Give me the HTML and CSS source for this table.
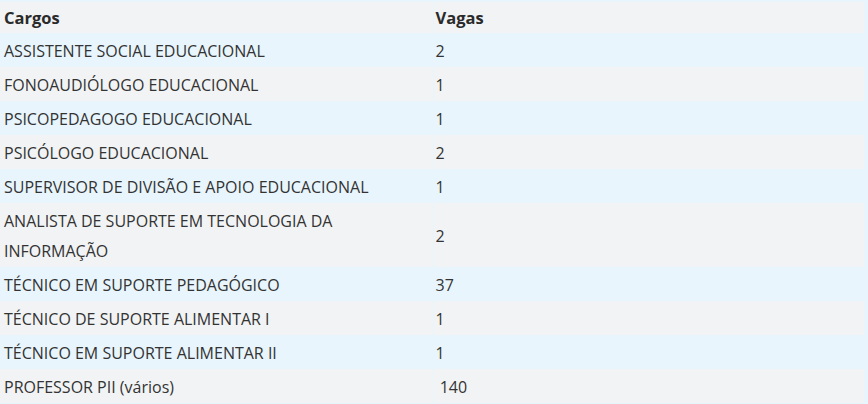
FILE: index.html
```html
<!DOCTYPE html>
<html lang="pt-BR">
<head>
<meta charset="utf-8">
<title>Cargos e Vagas</title>
<link rel="stylesheet" href="styles.css">
</head>
<body>
<table class="vagas">
  <thead>
    <tr class="row-gray"><th class="col-cargo">Cargos</th><th class="col-vagas">Vagas</th></tr>
  </thead>
  <tbody>
    <tr class="row-blue"><td>ASSISTENTE SOCIAL EDUCACIONAL</td><td>2</td></tr>
    <tr class="row-gray"><td>FONOAUDIÓLOGO EDUCACIONAL</td><td>1</td></tr>
    <tr class="row-blue"><td>PSICOPEDAGOGO EDUCACIONAL</td><td>1</td></tr>
    <tr class="row-gray"><td>PSICÓLOGO EDUCACIONAL</td><td>2</td></tr>
    <tr class="row-blue"><td>SUPERVISOR DE DIVISÃO E APOIO EDUCACIONAL</td><td>1</td></tr>
    <tr class="row-gray"><td>ANALISTA DE SUPORTE EM TECNOLOGIA DA INFORMAÇÃO</td><td>2</td></tr>
    <tr class="row-blue"><td>TÉCNICO EM SUPORTE PEDAGÓGICO</td><td>37</td></tr>
    <tr class="row-gray"><td>TÉCNICO DE SUPORTE ALIMENTAR I</td><td>1</td></tr>
    <tr class="row-blue"><td>TÉCNICO EM SUPORTE ALIMENTAR II</td><td>1</td></tr>
    <tr class="row-gray"><td>PROFESSOR PII (vários)</td><td>&nbsp;140</td></tr>
  </tbody>
</table>
</body>
</html>
```
FILE: styles.css
```css
html, body {
  margin: 0;
  padding: 0;
  background: #e8f5fd;
}
body {
  padding-top: 2px;
  font-family: "Open Sans", "Noto Sans", sans-serif;
  color: #333;
}
.vagas {
  width: 864px;
  border-collapse: collapse;
  table-layout: fixed;
  font-size: 16px;
}
.vagas th, .vagas td {
  box-sizing: border-box;
  text-align: left;
  vertical-align: middle;
  padding: 3px 4px 1px;
  line-height: 30px;
}
.col-cargo { width: 433px; }
.vagas th {
  font-weight: 700;
  color: #2a2a2a;
  font-size: 16.5px;
  line-height: 27px;
  padding: 2px 4px;
}
.vagas td:nth-child(2), .vagas th:nth-child(2) {
  border-left: 1px solid #e8f5fd;
  padding-left: 2px;
}
.vagas td:first-child {
  padding-right: 60px;
}
.row-gray { background: #f2f3f5; }
.row-blue { background: #e8f5fd; }
```
